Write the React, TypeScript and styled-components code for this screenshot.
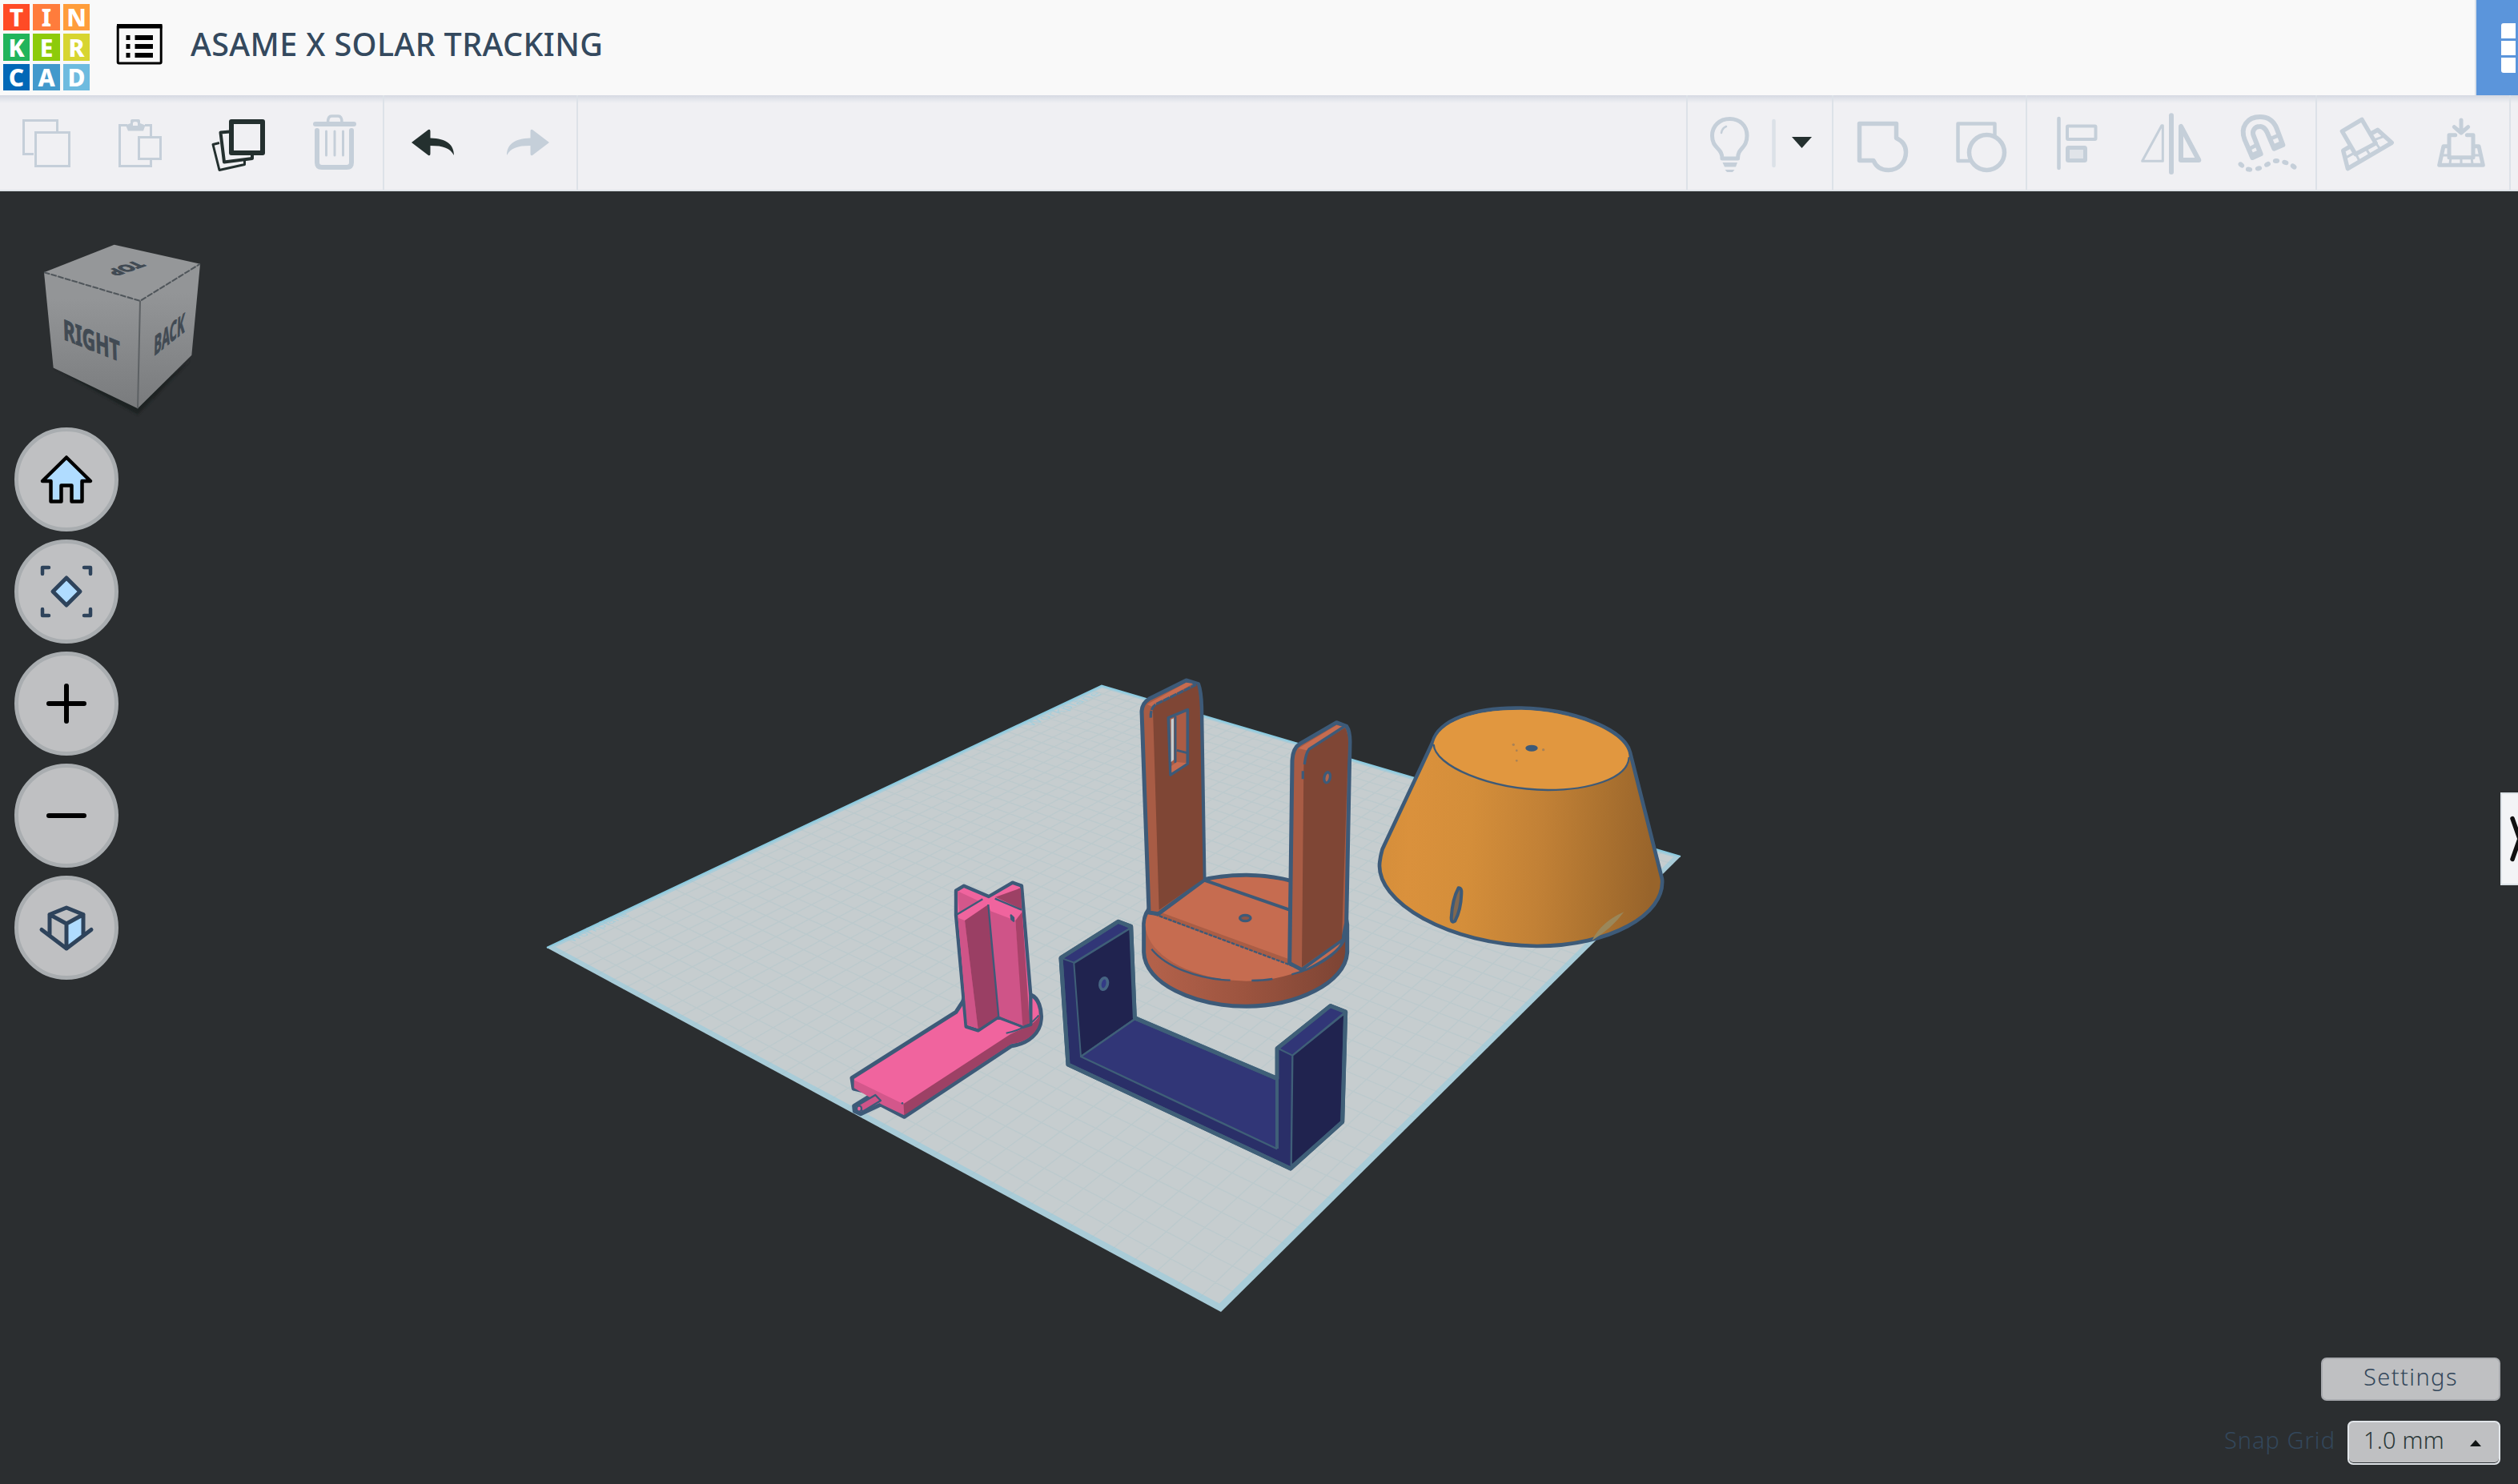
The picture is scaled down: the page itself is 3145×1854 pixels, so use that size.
import React from "react";
import styled, { createGlobalStyle } from "styled-components";

const FONT = '"Noto Sans", "Open Sans", sans-serif';
const MUTED = "#c5cfd9";
const INK = "#24302f";
const NAVY = "#2e435b";
const EDGE = "#3d5a78";

const GlobalStyle = createGlobalStyle`
  *, *::before, *::after { box-sizing: border-box; }
  body { margin: 0; background: #2b2e30; font-family: ${FONT}; overflow: hidden; }
  button { font: inherit; padding: 0; border: 0; background: none; color: inherit; }
  svg { display: block; }
`;

const Page = styled.div`
  display: flex;
  flex-direction: column;
  width: 3145px;
  height: 1854px;
  overflow: hidden;
`;

/* ---------- header ---------- */

const Header = styled.header`
  display: flex;
  height: 119px;
  flex: none;
  background: #f9f9f9;
`;

const Logo = styled.div`
  display: grid;
  grid-template-columns: 33px 34px 33px;
  grid-template-rows: 33px 34px 33px;
  gap: 4px;
  padding: 5px 0 0 4px;
`;

const LogoTile = styled.span<{ $color: string }>`
  display: flex;
  align-items: center;
  justify-content: center;
  background: ${(p) => p.$color};
  color: #fff;
  font: 800 30px/33px ${FONT};
`;

const DesignsButton = styled.button`
  margin: 28px 0 0 33px;
  width: 60px;
  height: 54px;
`;

const Title = styled.h1`
  margin: 28px 0 0 33px;
  color: #34495e;
  font: 500 39.5px/55px ${FONT};
  letter-spacing: 0.38px;
  white-space: nowrap;
`;

const GridSwitch = styled.button`
  display: flex;
  flex-direction: column;
  gap: 3px;
  width: 54px;
  margin-left: auto;
  padding: 29px 0 0 31px;
  border-left: 2px solid #dbe2ea;
  background: #5b95db;
`;

const GridCell = styled.span`
  width: 18px;
  height: 18.5px;
  background: #fff;
  &:first-child { border-top-left-radius: 3px; }
  &:last-child { border-bottom-left-radius: 3px; }
`;

/* ---------- toolbar ---------- */

const Toolbar = styled.div`
  display: flex;
  flex: none;
  height: 120px;
  border-bottom: 2px solid #dfe3e8;
  background: linear-gradient(#d5d9e2, #e6e8ed 6px, #f0f0f3 10px);
`;

const ToolGroup = styled.div<{ $width: number; $push?: boolean }>`
  display: flex;
  width: ${(p) => p.$width}px;
  margin-left: ${(p) => (p.$push ? "auto" : "0")};
  border-right: 2px solid #dde2e8;
  ${(p) => p.$push && "border-left: 2px solid #dde2e8;"}
`;

const ToolbarEnd = styled.div`
  width: 9px;
`;

const ToolButton = styled.button<{ $width: number; $color: string }>`
  width: ${(p) => p.$width}px;
  height: 118px;
  flex: none;
  color: ${(p) => p.$color};
`;

type ToolProps = { x: number; w: number; color?: string; children: React.ReactNode };

function Tool({ x, w, color = MUTED, children }: ToolProps) {
  return (
    <ToolButton $width={w} $color={color}>
      <svg width={w} height={118} viewBox={`${x} 119 ${w} 118`} fill="none" stroke="currentColor">
        {children}
      </svg>
    </ToolButton>
  );
}

/* ---------- workspace ---------- */

const Workspace = styled.main`
  position: relative;
  display: flex;
  flex: 1;
  background: #2b2e30;
`;

const Scene = styled.svg`
  position: absolute;
  inset: 0;
`;

const Rail = styled.nav`
  position: relative;
  display: flex;
  flex-direction: column;
  width: 300px;
`;

const RailButtons = styled.div`
  display: flex;
  flex-direction: column;
  gap: 10px;
  padding-left: 18px;
`;

const RoundButton = styled.button`
  width: 130px;
  height: 130px;
  border: 5px solid #a9adb0;
  border-radius: 50%;
  background: #bfc0c2;
  display: grid;
  place-items: center;
`;

const RightSide = styled.aside`
  position: relative;
  display: flex;
  flex-direction: column;
  align-items: flex-end;
  margin-left: auto;
`;

const PanelHandle = styled.button`
  width: 22px;
  height: 116px;
  margin-top: 751px;
  border: 2px solid #dce2e7;
  border-right: 0;
  background: #f3f4f6;
  overflow: hidden;
`;

const BottomControls = styled.div`
  display: flex;
  flex-direction: column;
  align-items: flex-end;
  gap: 25px;
  margin: auto 22px 24px 0;
`;

const SettingsButton = styled.button`
  width: 224px;
  height: 54px;
  border: 2px solid #a9abaf;
  border-radius: 7px;
  background: #bfc0c2;
  color: #33475b;
  font: 350 29px/44px ${FONT};
  padding-bottom: 6px;
  letter-spacing: 1.4px;
`;

const SnapRow = styled.div`
  display: flex;
  gap: 15px;
`;

const SnapLabel = styled.label`
  color: #33475b;
  font: 350 29px/48px ${FONT};
  letter-spacing: 1px;
`;

const SnapSelect = styled.button`
  display: flex;
  align-items: center;
  justify-content: space-between;
  width: 191px;
  height: 55px;
  padding: 0 22px 7px 18px;
  border: 2px solid #e2e6ea;
  border-radius: 7px;
  background: #bfc0c2;
  box-shadow: inset 0 -1px 0 #2b3034;
  color: #2a3838;
  font: 350 29px/44px ${FONT};
  letter-spacing: 0.2px;
`;

const CaretUp = styled.span`
  width: 0;
  height: 0;
  margin-top: 7px;
  border: 7px solid transparent;
  border-top: 0;
  border-bottom: 8px solid #101414;
`;

const logo: [string, string][] = [
  ["T", "#ff4b26"], ["I", "#ff7c3c"], ["N", "#ff9d3b"],
  ["K", "#21b45b"], ["E", "#8dcb0a"], ["R", "#d7d530"],
  ["C", "#0168b7"], ["A", "#4299cc"], ["D", "#6ebbdf"],
];

/* Maps the unit square onto the four projected corners of the workplane. */
type Pt = [number, number];
function projector(p0: Pt, p1: Pt, p2: Pt, p3: Pt) {
  const sx = p0[0] - p1[0] + p2[0] - p3[0];
  const sy = p0[1] - p1[1] + p2[1] - p3[1];
  const dx1 = p1[0] - p2[0], dx2 = p3[0] - p2[0];
  const dy1 = p1[1] - p2[1], dy2 = p3[1] - p2[1];
  const det = dx1 * dy2 - dx2 * dy1;
  const g = (sx * dy2 - dx2 * sy) / det;
  const h = (dx1 * sy - sx * dy1) / det;
  const a = p1[0] - p0[0] + g * p1[0], b = p3[0] - p0[0] + h * p3[0];
  const d = p1[1] - p0[1] + g * p1[1], e = p3[1] - p0[1] + h * p3[1];
  return (u: number, v: number): string => {
    const w = g * u + h * v + 1;
    return `${((a * u + b * v + p0[0]) / w).toFixed(1)} ${((d * u + e * v + p0[1]) / w).toFixed(1)}`;
  };
}

const project = projector([1376, 856.5], [2099, 1070], [1525, 1639], [683, 1184]);
const GRID = 40;
const gridPath = Array.from({ length: GRID - 1 }, (_, i) => {
  const t = (i + 1) / GRID;
  return `M${project(t, 0)}L${project(t, 1)}M${project(0, t)}L${project(1, t)}`;
}).join("");

function Workplane() {
  return (
    <g>
      <path d={`M${project(0, 0)}L${project(1, 0)}L${project(1, 1)}L${project(0, 1)}Z`} fill="#a9ccd8" />
      <path d={`M${project(0.007, 0.007)}L${project(0.993, 0.007)}L${project(0.993, 0.993)}L${project(0.007, 0.993)}Z`} fill="#c6cdcf" />
      <path d={gridPath} stroke="#a9c3cb" strokeOpacity="0.32" strokeWidth="1.3" fill="none" />
      <path d={`M${project(0, 1)}L${project(0, 0)}L${project(1, 0)}`} stroke="#8ccbe0" strokeWidth="2" fill="none" />
      <g fill="#9ccfe0" fillOpacity="0.75" fontFamily={FONT} fontSize="19">
        <text transform="matrix(.92 -.43 .8 .25 1288 908)">Workplane</text>
        <text transform="matrix(.75 -.35 .8 .3 715 1177)">Workplane</text>
      </g>
    </g>
  );
}

function PinkPart() {
  return (
    <g transform="translate(1040 1080) scale(.33333)" stroke={EDGE} strokeWidth="7" strokeLinejoin="round" fill="none">
      <path d="M72 800L462 553L487 515L500 480L745 490C770 500 784 540 781 580C778 630 735 672 670 680L268 946L180 900L105 935L82 925L80 905L155 858L78 840Z" fill="#f0649e" strokeWidth="15" />
      <path d="M80 808L265 898L268 940L185 900L80 838Z" fill="#d3578b" stroke="none" />
      <path d="M265 898L665 637L700 620C740 605 765 590 777 560C782 610 745 665 670 672L268 940Z" fill="#9d4165" stroke="none" />
      <path d="M95 902L160 864L180 885L112 926Z" fill="#cf5488" />
      <ellipse cx="99" cy="915" rx="9" ry="11" fill="#f0649e" />
      <path d="M650 632C700 622 745 600 772 565" strokeWidth="6" />
      <path d="M462 98L492 80L585 120L674 68L708 80L742 490L742 600L715 608L620 572L545 622L500 608L462 190Z" fill="#f0649e" strokeWidth="13" />
      <path d="M468 100L550 138L475 180Z" fill="#d3578b" stroke="none" />
      <path d="M610 122L705 88L708 168Z" fill="#9d4165" stroke="none" />
      <path d="M470 200L495 210L545 615L504 602Z" fill="#cf5488" stroke="none" />
      <path d="M495 210L583 150L620 568L545 618Z" fill="#9a3f64" stroke="none" />
      <path d="M583 150L592 175L685 210L715 605L622 570Z" fill="#cf5488" stroke="none" />
      <path d="M685 210L710 178L738 595L712 605Z" fill="#a84269" stroke="none" />
      <path d="M462 190L562 130M608 128L708 170M583 150L592 250L622 572L710 608M620 572L545 622" strokeWidth="7" />
      <path d="M668 190L678 200V212L670 205Z" fill={EDGE} />
      <circle cx="261" cy="895" r="4" fill={EDGE} stroke="none" />
    </g>
  );
}

function NavyPart() {
  return (
    <g transform="translate(1300 1130) scale(.33333)" stroke="#3f5f78" strokeWidth="8" strokeLinejoin="round" fill="none">
      <path d="M75 200L290 64L338 82L352 425L885 652V540L1085 380L1142 402L1130 815L936 990L102 600Z" fill="#2a2f68" strokeWidth="15" />
      <path d="M80 202L290 68L335 88L124 218Z" fill="#313677" strokeWidth="6" />
      <path d="M124 220L335 90L350 430L150 570Z" fill="#20234f" strokeWidth="6" />
      <path d="M150 570L352 430L883 656V915Z" fill="#313677" strokeWidth="7" />
      <path d="M890 540L1085 384L1138 405L943 566Z" fill="#313677" strokeWidth="6" />
      <path d="M943 566L1138 408L1127 813L938 980Z" fill="#20234f" strokeWidth="7" />
      <path d="M885 540V915" strokeWidth="12" />
      <path d="M75 200L290 64L338 82L352 425L885 652M885 540L1085 380L1142 402L1130 815L936 990L102 600L75 200" strokeWidth="15" />
      <ellipse cx="236" cy="297" rx="14" ry="22" fill="#333a86" stroke="#466483" strokeWidth="11" transform="rotate(12 236 297)" />
    </g>
  );
}

function OrangeBase() {
  return (
    <g transform="translate(1380 820) scale(.33333)" stroke={EDGE} strokeWidth="7" strokeLinejoin="round" fill="none">
      <path d="M146 1000C150 890 350 820 530 820C710 822 900 895 908 1005V1110C900 1225 720 1310 530 1312C330 1310 150 1225 146 1110Z" fill="url(#baseSide)" strokeWidth="15" />
      <path d="M152 1005C156 895 352 827 530 827C710 829 897 900 901 1000C905 1120 720 1217 530 1217C330 1215 152 1120 152 1005Z" fill="#c66c50" stroke="none" />
      <path d="M175 1097C230 1165 350 1210 470 1214M550 1215C580 1215 605 1213 628 1209M700 1192C790 1170 870 1120 898 1065" strokeWidth="7" />
      <path d="M370 838L698 952" strokeWidth="12" />
      <path d="M205 958L690 1135V1155L180 968Z" fill="#aa5d45" stroke="none" />
      <path d="M170 960L735 1172" strokeWidth="7" strokeDasharray="14 4" />
      <ellipse cx="526" cy="981" rx="20" ry="11" fill="#8c5547" strokeWidth="10" />

      <path d="M138 205Q140 175 165 160L305 90L350 104Q360 130 362 190L372 838L200 965L165 960Z" fill="#a85c45" strokeWidth="15" />
      <path d="M158 180L305 98L330 102L180 190Z" fill="#c66c50" stroke="none" />
      <path d="M180 200Q185 180 210 168L345 104Q354 140 356 190L368 835L203 950Z" fill="#7f4635" stroke="none" />
      <path d="M172 230Q170 190 195 178L342 106" strokeWidth="10" strokeDasharray="26 3" />
      <path d="M200 965L372 840" strokeWidth="7" />
      <path d="M238 230L310 200V402L246 444Z" fill="#aa5c45" strokeWidth="11" />
      <path d="M248 236L258 232V388L248 396Z" fill="#c6cdcf" stroke="none" />
      <path d="M264 225V400M270 352L308 362" strokeWidth="9" />
      <path d="M250 410L270 396L306 400L250 436Z" fill="#c66c50" stroke="none" />

      <path d="M702 390Q704 345 730 328L868 248L905 262Q918 280 918 320L905 1000L892 1062L738 1175L692 1150Z" fill="#a85c45" strokeWidth="15" />
      <path d="M725 345L868 258L895 264L755 352Z" fill="#c66c50" stroke="none" />
      <path d="M745 420Q745 360 775 342L900 268Q912 290 912 325L888 1058L738 1165Z" fill="#7f4635" stroke="none" />
      <path d="M742 460V430M748 405Q752 365 765 348L895 264" strokeWidth="10" />
      <path d="M745 1172L890 1066Q880 1110 755 1174Z" fill="#c66c50" strokeWidth="7" />
      <ellipse cx="833" cy="454" rx="11" ry="20" fill="#b0664e" strokeWidth="10" transform="rotate(12 833 454)" />
    </g>
  );
}

function AmberCone() {
  return (
    <g transform="translate(1700 850) scale(.33333)" stroke={EDGE} strokeWidth="14" strokeLinejoin="round" fill="none">
      <path d="M268 232C290 150 420 100 600 104C790 108 985 180 1008 270L1128 745C1140 880 930 995 660 996C330 992 50 830 70 680C72 660 75 650 80 632Z" fill="url(#coneSide)" />
      <path d="M272 235C290 155 420 110 600 110C790 114 1003 195 1003 285C1000 370 850 411 700 411C480 408 268 320 272 235Z" fill="#e1973f" stroke="none" />
      <path d="M272 240C275 320 480 408 700 411C850 411 1000 370 1004 288" strokeWidth="7" />
      <ellipse cx="639" cy="254" rx="23" ry="12" fill={EDGE} stroke="none" />
      <g fill="#a98256" stroke="none">
        <circle cx="571" cy="241" r="5" /><circle cx="583" cy="263" r="4" /><circle cx="683" cy="260" r="5" /><circle cx="583" cy="301" r="4" />
      </g>
      <path d="M365 778Q378 776 376 800Q374 860 352 902Q338 912 338 890Q342 820 365 778Z" fill="#81684f" strokeWidth="12" />
      <path d="M865 975Q900 905 985 868Q940 930 865 975Z" fill="#9a875a" stroke="none" />
    </g>
  );
}

function ViewCube() {
  return (
    <svg width="300" height="295" viewBox="0 239 300 295">
      <defs>
        <linearGradient id="cubeSide" x1="0" y1="0" x2="0" y2="1">
          <stop offset="0.2" stopColor="#939597" /><stop offset="1" stopColor="#797b7d" />
        </linearGradient>
        <filter id="soft"><feGaussianBlur stdDeviation="4" /></filter>
      </defs>
      <g transform="translate(0 270) scale(.33333 .35077)">
        <path d="M200 540L516 708L715 512L516 660Z" fill="#1e2021" filter="url(#soft)" />
        <path d="M165 200L428 102L750 170L525 302Z" fill="#959799" />
        <path d="M165 200L525 302L516 685L200 540Z" fill="url(#cubeSide)" />
        <path d="M525 302L750 170L718 495L516 685Z" fill="url(#cubeSide)" />
        <path d="M165 200L525 302L750 170" stroke="#50565b" strokeWidth="6" strokeDasharray="22 5" fill="none" />
        <path d="M525 302L516 685" stroke="#5d6164" strokeWidth="6" fill="none" />
        <g fill="#414a53" stroke="#414a53" strokeWidth="3" fontFamily={FONT} fontWeight="700" fontSize="100">
          <text transform="matrix(.81 .31 .03 1 238 438)" textLength="262" lengthAdjust="spacingAndGlyphs">RIGHT</text>
          <text transform="matrix(.58 -.44 -.03 .96 576 499)" textLength="198" lengthAdjust="spacingAndGlyphs">BACK</text>
          <text transform="matrix(-.56 .19 -.56 -.25 508 158)" strokeWidth="7" textLength="200" lengthAdjust="spacingAndGlyphs">TOP</text>
        </g>
      </g>
    </svg>
  );
}

const RoundIcon = ({ children }: { children: React.ReactNode }) => (
  <svg width="120" height="120" viewBox="5 5 120 120" fill="none" strokeLinejoin="round" strokeLinecap="round">
    {children}
  </svg>
);

export default function App() {
  return (
    <Page>
      <GlobalStyle />
      <Header>
        <Logo>
          {logo.map(([letter, color]) => (
            <LogoTile key={letter} $color={color}>{letter}</LogoTile>
          ))}
        </Logo>
        <DesignsButton aria-label="Designs">
          <svg width="60" height="54" viewBox="145 28 60 54">
            <rect x="147.2" y="31.5" width="54" height="47.5" rx="1.5" fill="none" stroke="#000" strokeWidth="3" />
            <path d="M146 30h56.500v5.500h-56.500zM157.500 44h5v6h-5zM168.500 44h22.500v6h-22.500zM157.500 55h5v6h-5zM168.500 55h22.500v6h-22.500zM157.500 66h5v6h-5zM168.500 66h22.500v6h-22.500z" />
          </svg>
        </DesignsButton>
        <Title>ASAME X SOLAR TRACKING</Title>
        <GridSwitch aria-label="Blocks">
          <GridCell /><GridCell /><GridCell />
        </GridSwitch>
      </Header>

      <Toolbar>
        <ToolGroup $width={480}>
          <Tool x={0} w={120}>
            <path d="M42 192.500H29.500V150.500H71.500V164M44.500 165.500H86.500V207.500H44.500Z" strokeWidth="3" />
          </Tool>
          <Tool x={120} w={120}>
            <path d="M159 156.500H149.500V207.500H188.500V199M181 156.500H188.500V170M173.500 171.500H200.500V198.500H173.500Z" strokeWidth="3" />
            <path fillRule="evenodd" d="M157 156.500L163 154V151Q163 149 165 149H173Q175 149 175 151V154L181.500 156.500L179 163.500H160ZM166 154Q166 152 169 152T172 154V157H166Z" fill="currentColor" stroke="none" />
          </Tool>
          <Tool x={240} w={120} color={INK}>
            <path d="M289 152H328V191H289Z" strokeWidth="6" strokeLinejoin="round" />
            <path d="M287 164.500L275.500 165.500L280 202.500L315 198V193" strokeWidth="4" strokeLinejoin="round" />
            <path d="M274 178.500L266 180.500L274 212.500L305.500 205.500V201" strokeWidth="3" strokeLinejoin="round" />
          </Tool>
          <Tool x={360} w={118}>
            <path d="M394 155H442" strokeWidth="6" strokeLinecap="round" />
            <path d="M409.500 153Q409.500 145 414 145H422.500Q427 145 427 153" strokeWidth="3.500" />
            <path d="M396 163V203Q396 209 402 209H433Q439 209 439 203V163" strokeWidth="6" strokeLinecap="round" />
            <path d="M407.500 164V194M418 164V194M428.500 164V194" strokeWidth="3" strokeLinecap="round" />
          </Tool>
        </ToolGroup>
        <ToolGroup $width={242}>
          <Tool x={480} w={120} color={INK}>
            <path d="M514 178L535 162Q537.500 161 537.500 164V172.500C558 173 567 181 567 194C562 185 554 182 537.500 182V192Q537.500 195 535 194Z" fill="currentColor" stroke="none" />
          </Tool>
          <Tool x={600} w={120}>
            <path d="M686 178L665 162Q662.500 161 662.500 164V172.500C642 173 633 181 633 194C638 185 646 182 662.500 182V192Q662.500 195 665 194Z" fill="currentColor" stroke="none" />
          </Tool>
        </ToolGroup>

        <ToolGroup $width={184} $push>
          <Tool x={2108} w={100}>
            <path d="M2151 198C2151 184 2138.500 186 2138.500 169.500C2138.500 157 2148 148.500 2160.500 148.500S2182 157 2182 169.500C2182 186 2170.500 184 2170.500 198Z" strokeWidth="5" strokeLinejoin="round" />
            <path d="M2150 166Q2151 160 2156 158" strokeWidth="2.500" strokeLinecap="round" />
            <path d="M2151.500 203H2170L2168 208.500H2154ZM2154.500 212H2166.500L2164 215H2157Z" fill="currentColor" stroke="none" />
          </Tool>
          <Tool x={2208} w={80}>
            <path d="M2215.500 151V207" stroke="#dbe1e7" strokeWidth="4.500" strokeLinecap="round" />
            <path d="M2238 171H2263L2250.500 185Z" fill={INK} stroke="none" />
          </Tool>
        </ToolGroup>
        <ToolGroup $width={242}>
          <Tool x={2290} w={120}>
            <path d="M2322.500 154.500H2368.500V172.500C2376 176 2380.500 182 2380.500 190C2380.500 203 2371 212.500 2358.500 212.500C2349 212.500 2343 208 2340 200.500H2322.500Z" strokeWidth="5.500" strokeLinejoin="round" />
          </Tool>
          <Tool x={2410} w={120}>
            <path d="M2460 201H2445.500V154.500H2491.500V169" strokeWidth="4.500" strokeLinejoin="round" />
            <circle cx="2481.500" cy="190.500" r="22" strokeWidth="5.500" />
          </Tool>
        </ToolGroup>
        <ToolGroup $width={362}>
          <Tool x={2532} w={120}>
            <path d="M2571.500 148V210" strokeWidth="4.500" strokeLinecap="round" />
            <rect x="2582" y="157.500" width="35.500" height="16.500" rx="1" strokeWidth="4" />
            <rect x="2582.500" y="184.500" width="22" height="16" rx="1" fill="#e0e4e9" strokeWidth="5" />
          </Tool>
          <Tool x={2652} w={120}>
            <g transform="translate(2640 130) scale(.33333)" strokeLinejoin="round" strokeLinecap="round">
              <path d="M216 43V255" strokeWidth="18" />
              <path d="M107 214L180 80H184V214Z" strokeWidth="9" />
              <path d="M252 84V210H319Z" strokeWidth="18" />
            </g>
          </Tool>
          <Tool x={2772} w={119}>
            <g transform="translate(2640 130) scale(.33333)" strokeLinejoin="round">
              <path d="M520 201L491 134C472 85 502 48 548 48C583 48 602 68 611 92L634 153L601 167L575 106C565 83 548 84 548 84C526 84 518 103 524 118L551 187Z" strokeWidth="18" />
              <path d="M508 168L538 152M587 130L618 117" strokeWidth="14" />
              <path d="M522 193L549 181M602 161L630 149" strokeWidth="22" />
              {[[478, 228, 40], [507, 245, 10], [543, 241, -15], [576, 226, -28], [609, 213, -5], [643, 219, 20], [674, 234, 35]].map(([x, y, r]) => (
                <ellipse key={x} cx={x} cy={y} rx="12.500" ry="9" fill="currentColor" stroke="none" transform={`rotate(${r} ${x} ${y})`} />
              ))}
            </g>
          </Tool>
        </ToolGroup>
        <ToolGroup $width={242}>
          <Tool x={2894} w={120}>
            <g transform="translate(2640 130) scale(.33333)" strokeLinejoin="round" strokeWidth="16">
              <path d="M856 102L930 58L982 147L906 188Z" />
              <path d="M966 110L989 97L1042 145L877 242L860 174L884 160" />
              <path d="M908 188L920 212M947 170L960 190M983 147L998 168M868 202L900 184M972 136L1010 122" strokeWidth="9" />
            </g>
          </Tool>
          <Tool x={3014} w={120}>
            <g transform="translate(2640 130) scale(.33333)" strokeLinejoin="round" strokeLinecap="round" strokeWidth="15">
              <path d="M1302 60V105M1276 86L1302 108L1328 86" />
              <path d="M1280 116H1257V200H1347V116H1324" />
              <path d="M1254 158H1236L1220 229H1384L1368 158H1350" />
              <path d="M1230 192H1252M1352 192H1376M1262 208L1260 225M1302 208V225M1342 208L1344 225" strokeWidth="9" />
            </g>
          </Tool>
        </ToolGroup>
        <ToolbarEnd />
      </Toolbar>

      <Workspace>
        <Scene width="3145" height="1615" viewBox="0 239 3145 1615">
          <defs>
            <linearGradient id="baseSide">
              <stop offset="0.05" stopColor="#b2614a" /><stop offset="0.5" stopColor="#9c543f" /><stop offset="1" stopColor="#7c4434" />
            </linearGradient>
            <linearGradient id="coneSide" x1="0" y1="0" x2="1" y2="0.06">
              <stop offset="0" stopColor="#d38d3a" /><stop offset="0.14" stopColor="#da913c" /><stop offset="0.35" stopColor="#d48e3a" />
              <stop offset="0.6" stopColor="#c28136" /><stop offset="0.8" stopColor="#ad7330" /><stop offset="1" stopColor="#98642b" />
            </linearGradient>
          </defs>
          <Workplane />
          <AmberCone />
          <OrangeBase />
          <NavyPart />
          <PinkPart />
        </Scene>

        <Rail>
          <ViewCube />
          <RailButtons>
            <RoundButton aria-label="Home view">
              <RoundIcon>
                <path d="M65 37.500L95 67H84.500V92.500H71.500V72.500H58.500V92.500H45.500V67H35Z" fill="#b0dcff" stroke="#000" strokeWidth="4.500" />
              </RoundIcon>
            </RoundButton>
            <RoundButton aria-label="Fit view">
              <RoundIcon>
                <path d="M65 48L82 65L65 82L48 65Z" fill="#b0dcff" stroke={NAVY} strokeWidth="5" />
                <path d="M43 35H35V43M87 35H95V43M43 95H35V87M87 95H95V87" stroke={NAVY} strokeWidth="4.500" />
              </RoundIcon>
            </RoundButton>
            <RoundButton aria-label="Zoom in">
              <RoundIcon><path d="M43 65H87M65 43V87" stroke="#000" strokeWidth="6" /></RoundIcon>
            </RoundButton>
            <RoundButton aria-label="Zoom out">
              <RoundIcon><path d="M43 65H87" stroke="#000" strokeWidth="6" /></RoundIcon>
            </RoundButton>
            <RoundButton aria-label="Perspective">
              <RoundIcon>
                <path d="M65 60L86 49V74L65 90Z" fill="#b0dcff" />
                <path d="M44 74V48.500L65 40L86 48.500V74M44 48.500L65 60L86 48.500M65 60V91M34 67.500L65 91L96 67.500" stroke={NAVY} strokeWidth="5" />
              </RoundIcon>
            </RoundButton>
          </RailButtons>
        </Rail>

        <RightSide>
          <PanelHandle aria-label="Show panel">
            <svg width="20" height="112" viewBox="3125 992 20 112" fill="none">
              <path d="M3138 1022.500L3147 1048L3138 1073.500" stroke="#111" strokeWidth="5.500" strokeLinecap="round" />
            </svg>
          </PanelHandle>
          <BottomControls>
            <SettingsButton>Settings</SettingsButton>
            <SnapRow>
              <SnapLabel>Snap Grid</SnapLabel>
              <SnapSelect>1.0 mm<CaretUp /></SnapSelect>
            </SnapRow>
          </BottomControls>
        </RightSide>
      </Workspace>
    </Page>
  );
}
